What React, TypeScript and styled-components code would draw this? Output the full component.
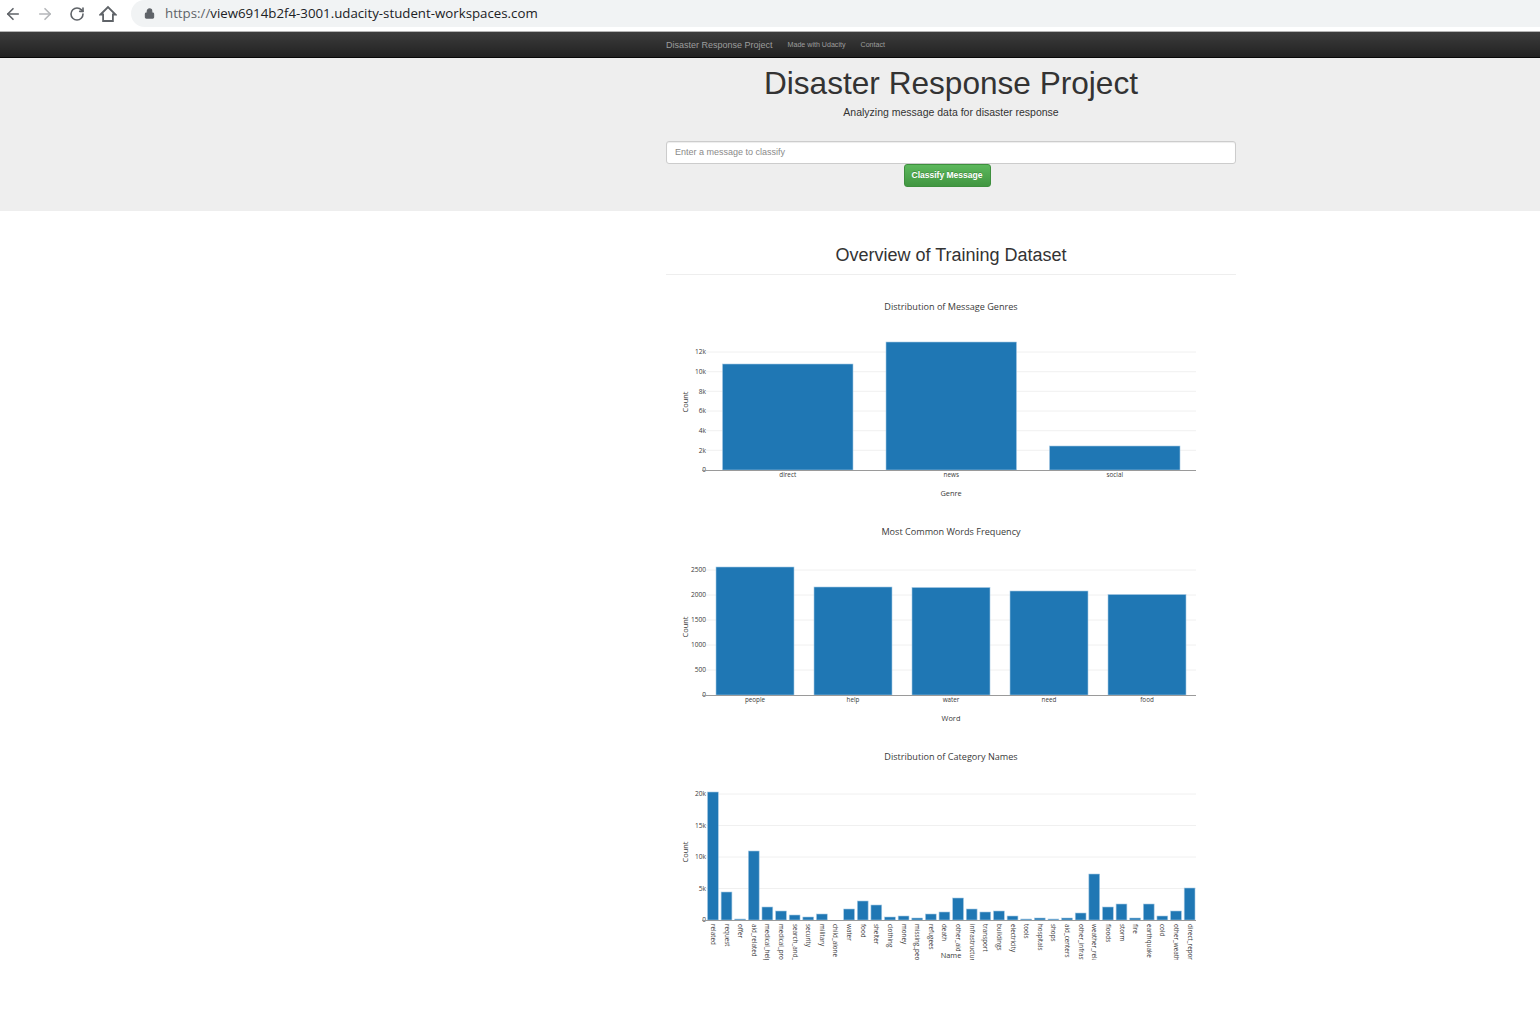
import React from "react";
import styled, { createGlobalStyle } from "styled-components";
import { ArrowLeft, ArrowRight, RotateCw, Lock } from "lucide-react";

const GlobalStyle = createGlobalStyle`
  html, body {
    margin: 0;
    padding: 0;
    background: #fff;
    font-family: "Liberation Sans", Arial, sans-serif;
    color: #333;
  }
`;

const Page = styled.div`
  width: 1540px;
  height: 1035px;
  overflow: hidden;
`;

const BrowserBar = styled.div`
  height: 32px;
  box-sizing: border-box;
  display: flex;
  align-items: flex-start;
  background: #fff;
  border-bottom: 1px solid #b4b4b4;
`;

const NavIcons = styled.div`
  width: 131px;
  height: 27px;
  display: flex;
  align-items: center;
  padding-left: 4px;
  box-sizing: border-box;
  gap: 14px;
  color: #5f6368;
`;

const IconSlot = styled.span<{ $faded?: boolean }>`
  display: flex;
  color: ${(p) => (p.$faded ? "#b5b7ba" : "#5f6368")};
`;

const ReloadSlot = styled(IconSlot)`
  margin-left: 1px;
`;

const UrlPill = styled.div`
  flex: 1;
  height: 27px;
  display: flex;
  align-items: center;
  padding-left: 13px;
  padding-bottom: 1px;
  box-sizing: border-box;
  gap: 10px;
  background: #f1f3f4;
  border-radius: 14px 0 0 14px;
  color: #5f6368;
`;

const UrlText = styled.span`
  font-family: "Open Sans", sans-serif;
  font-size: 13.27px;
  color: #202124;
  span {
    color: #5f6368;
  }
`;

const Navbar = styled.nav`
  height: 25px;
  display: flex;
  align-items: center;
  padding-left: 666px;
  background: linear-gradient(to bottom, #3c3c3c, #222);
  border-bottom: 1px solid #080808;
`;

const Brand = styled.a`
  font-size: 9px;
  color: #9d9d9d;
  margin-right: 15px;
`;

const NavLink = styled.a`
  font-size: 7.1px;
  color: #9d9d9d;
  margin-right: 15px;
`;

const Jumbotron = styled.header`
  height: 153px;
  background: #eee;
  padding-left: 666px;
  box-sizing: border-box;
`;

const Container = styled.div`
  width: 570px;
`;

const Title = styled.h1`
  margin: 0;
  padding-top: 6px;
  font-size: 31.6px;
  line-height: 38px;
  font-weight: 400;
  text-align: center;
  color: #333;
`;

const Lead = styled.p`
  margin: 2px 0 0;
  font-size: 10.5px;
  line-height: 16px;
  text-align: center;
  color: #333;
`;

const MessageInput = styled.input`
  display: block;
  width: 100%;
  height: 23px;
  margin-top: 21px;
  padding: 0 8px 2px;
  box-sizing: border-box;
  font-family: inherit;
  font-size: 9px;
  background: #fff;
  border: 1px solid #ccc;
  border-radius: 3px;
  box-shadow: inset 0 1px 1px rgba(0, 0, 0, 0.075);
  &::placeholder {
    color: #8a8a8a;
    opacity: 1;
  }
`;

const ButtonRow = styled.div`
  display: flex;
  justify-content: center;
  padding-right: 8px;
`;

const ClassifyButton = styled.button`
  width: 87px;
  height: 23px;
  padding: 0 0 2px;
  font-family: inherit;
  font-size: 8.5px;
  font-weight: 700;
  color: #fff;
  text-shadow: 0 -1px 0 rgba(0, 0, 0, 0.2);
  background: linear-gradient(to bottom, #5cb85c, #419641);
  border: 1px solid #3e8f3e;
  border-radius: 3px;
`;

const Main = styled.main`
  padding-left: 666px;
`;

const SectionTitle = styled.h2`
  margin: 0;
  padding: 33px 0 8px;
  font-size: 18px;
  line-height: 22px;
  font-weight: 400;
  text-align: center;
  color: #333;
  border-bottom: 1px solid #eee;
`;

const Charts = styled.div`
  display: flex;
  flex-direction: column;
  padding-top: 7px;
`;

const ChartSvg = styled.svg`
  display: block;
  width: 570px;
  height: 225px;
  overflow: visible;
  text {
    font-family: "Open Sans", sans-serif;
    fill: #3a3a3a;
  }
`;

type Bar = { label: string; x: number; w: number; h: number };

type ChartProps = {
  id: string;
  title: string;
  xTitle: string;
  xTitleY: number;
  baseline: number;
  ticks: { label: string; y: number }[];
  bars: Bar[];
  vertical?: boolean;
};

// coordinates are local to the 570x225 plot
function Chart({ id, title, xTitle, xTitleY, baseline, ticks, bars, vertical }: ChartProps) {
  return (
    <ChartSvg viewBox="0 0 570 225">
      <text x={285} y={28} fontSize={9.1} textAnchor="middle">{title}</text>
      {ticks.slice(1).map((t) => (
        <line key={t.label} x1={40} x2={530} y1={t.y} y2={t.y} stroke="#f0f0f0" strokeWidth={1} />
      ))}
      {ticks.map((t) => (
        <text key={t.label} x={40} y={t.y + 2.2} fontSize={6.6} textAnchor="end">{t.label}</text>
      ))}
      {bars.map((b) => (
        <rect key={b.label} x={b.x} y={baseline - b.h} width={b.w} height={b.h} fill="#1f77b4" stroke="#a5c9e3" strokeWidth={0.6} />
      ))}
      <line x1={36} x2={530} y1={baseline + 0.5} y2={baseline + 0.5} stroke="#9a9a9a" strokeWidth={1} />
      <text x={0} y={0} fontSize={7.4} textAnchor="middle" transform={`translate(21.5 ${baseline - 68}) rotate(-90)`}>Count</text>
      {vertical ? (
        <>
          <clipPath id={id}>
            <rect x={30} y={baseline} width={510} height={40} />
          </clipPath>
          <g clipPath={`url(#${id})`}>
            {bars.map((b) => (
              <text key={b.label} x={0} y={0} fontSize={6.3} transform={`translate(${b.x + b.w / 2 - 2} ${baseline + 4}) rotate(90)`}>
                {b.label}
              </text>
            ))}
          </g>
        </>
      ) : (
        bars.map((b) => (
          <text key={b.label} x={b.x + b.w / 2} y={baseline + 7} fontSize={6.3} textAnchor="middle">{b.label}</text>
        ))
      )}
      <text x={285} y={xTitleY} fontSize={7.4} textAnchor="middle">{xTitle}</text>
    </ChartSvg>
  );
}

const genreBars: Bar[] = [
  { label: "direct", x: 56.5, w: 130.5, h: 106 },
  { label: "news", x: 220, w: 130.5, h: 128 },
  { label: "social", x: 383.5, w: 130.5, h: 24 },
];

const genreTicks = [
  { label: "0", y: 188 },
  { label: "2k", y: 168.3 },
  { label: "4k", y: 148.7 },
  { label: "6k", y: 129 },
  { label: "8k", y: 109.3 },
  { label: "10k", y: 89.7 },
  { label: "12k", y: 70 },
];

const wordBars: Bar[] = [
  { label: "people", x: 50, w: 78, h: 128 },
  { label: "help", x: 148, w: 78, h: 108 },
  { label: "water", x: 246, w: 78, h: 107.5 },
  { label: "need", x: 344, w: 78, h: 104 },
  { label: "food", x: 442, w: 78, h: 100.5 },
];

const wordTicks = [
  { label: "0", y: 188 },
  { label: "500", y: 163 },
  { label: "1000", y: 138 },
  { label: "1500", y: 113 },
  { label: "2000", y: 88 },
  { label: "2500", y: 63 },
];

const categoryData: [string, number][] = [
  ["related", 128], ["request", 28], ["offer", 1], ["aid_related", 69],
  ["medical_help", 13], ["medical_products", 9], ["search_and_rescue", 5], ["security", 3],
  ["military", 6], ["child_alone", 0], ["water", 11], ["food", 19],
  ["shelter", 15], ["clothing", 3], ["money", 4], ["missing_people", 2],
  ["refugees", 6], ["death", 8], ["other_aid", 22], ["infrastructure_related", 11],
  ["transport", 8], ["buildings", 9], ["electricity", 4], ["tools", 1],
  ["hospitals", 2], ["shops", 1], ["aid_centers", 2], ["other_infrastructure", 7],
  ["weather_related", 46], ["floods", 13], ["storm", 16], ["fire", 2],
  ["earthquake", 16], ["cold", 4], ["other_weather", 9], ["direct_report", 32],
];

const categoryBars: Bar[] = categoryData.map(([label, h], i) => ({
  label,
  x: 41.5 + i * 13.62,
  w: 10.8,
  h,
}));

const categoryTicks = [
  { label: "0", y: 188 },
  { label: "5k", y: 156.5 },
  { label: "10k", y: 125 },
  { label: "15k", y: 93.5 },
  { label: "20k", y: 62 },
];

function HomeIcon() {
  return (
    <svg width="18" height="18" viewBox="0 0 18 18" fill="none" stroke="currentColor" strokeWidth="1.8">
      <path d="M1.5 9.5 9 2l7.5 7.5h-2.6V16H4.1V9.5Z" strokeLinejoin="miter" />
    </svg>
  );
}

export default function App() {
  return (
    <Page>
      <GlobalStyle />
      <BrowserBar>
        <NavIcons>
          <IconSlot><ArrowLeft size={18} strokeWidth={2.2} /></IconSlot>
          <IconSlot $faded><ArrowRight size={18} strokeWidth={2.2} /></IconSlot>
          <ReloadSlot><RotateCw size={16} strokeWidth={2.4} /></ReloadSlot>
          <IconSlot><HomeIcon /></IconSlot>
        </NavIcons>
        <UrlPill>
          <Lock size={11} strokeWidth={2.4} fill="currentColor" />
          <UrlText><span>https://</span>view6914b2f4-3001.udacity-student-workspaces.com</UrlText>
        </UrlPill>
      </BrowserBar>
      <Navbar>
        <Brand>Disaster Response Project</Brand>
        <NavLink>Made with Udacity</NavLink>
        <NavLink>Contact</NavLink>
      </Navbar>
      <Jumbotron>
        <Container>
          <Title>Disaster Response Project</Title>
          <Lead>Analyzing message data for disaster response</Lead>
          <MessageInput placeholder="Enter a message to classify" />
          <ButtonRow>
            <ClassifyButton>Classify Message</ClassifyButton>
          </ButtonRow>
        </Container>
      </Jumbotron>
      <Main>
        <Container>
          <SectionTitle>Overview of Training Dataset</SectionTitle>
          <Charts>
            <Chart id="genres" title="Distribution of Message Genres" xTitle="Genre" xTitleY={214} baseline={188} ticks={genreTicks} bars={genreBars} />
            <Chart id="words" title="Most Common Words Frequency" xTitle="Word" xTitleY={214} baseline={188} ticks={wordTicks} bars={wordBars} />
            <Chart id="categories" title="Distribution of Category Names" xTitle="Name" xTitleY={225.5} baseline={188} ticks={categoryTicks} bars={categoryBars} vertical />
          </Charts>
        </Container>
      </Main>
    </Page>
  );
}
